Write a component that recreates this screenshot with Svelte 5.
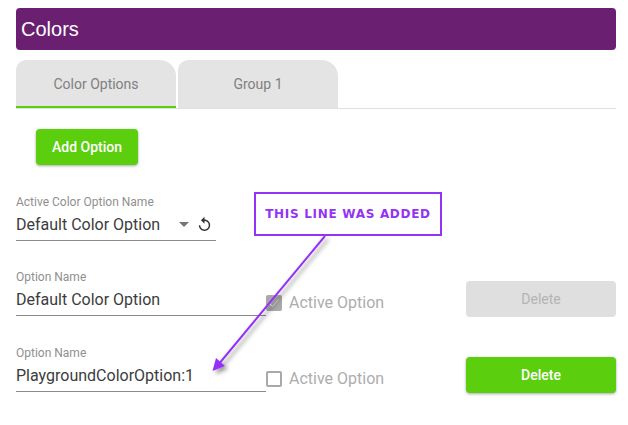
<script lang="ts">
  const options = [
    { name: "Default Color Option", active: true, disabled: true },
    { name: "PlaygroundColorOption:1", active: false, disabled: false },
  ];
</script>

<div class="page">
  <h1 class="title">Colors</h1>

  <div class="tabs">
    <button class="tab selected">Color Options</button>
    <button class="tab">Group 1</button>
  </div>

  <button class="btn add">Add Option</button>

  <div class="field select-field">
    <span class="label">Active Color Option Name</span>
    <div class="value">
      <span class="grow">Default Color Option</span>
      <span class="caret"></span>
      <svg class="reset" width="17" height="17" viewBox="0 0 24 24" fill="#333">
        <path d="M12 5V1L7 6l5 5V7c3.31 0 6 2.69 6 6s-2.69 6-6 6-6-2.69-6-6H4c0 4.42 3.58 8 8 8s8-3.58 8-8-3.58-8-8-8z" />
      </svg>
    </div>
  </div>

  {#each options as opt}
    <div class="row">
      <div class="field">
        <span class="label">Option Name</span>
        <div class="value">{opt.name}</div>
      </div>
      <div class="check-wrap">
        <span class="check" class:on={opt.active}>
          {#if opt.active}
            <svg width="16" height="16" viewBox="0 0 16 16" fill="none" stroke="#e8e8e8" stroke-width="1">
              <path d="M3.5 8.5 6.500 11.5 12.5 4.500" />
            </svg>
          {/if}
        </span>
        <span class="check-label">Active Option</span>
      </div>
      <button class="btn delete" disabled={opt.disabled}>Delete</button>
    </div>
  {/each}

  <div class="note">THIS LINE WAS ADDED</div>
  <svg class="arrow" width="628" height="425" viewBox="0 0 628 425">
    <defs>
      <filter id="shadow" x="-20%" y="-20%" width="140%" height="140%">
        <feDropShadow dx="3" dy="3" stdDeviation="2" flood-color="#000" flood-opacity="0.4" />
      </filter>
    </defs>
    <g filter="url(#shadow)">
      <line x1="325" y1="236" x2="218" y2="365" stroke="#9333f5" stroke-width="2" />
      <path d="M212.500 371 216 358 225 366Z" fill="#9333f5" />
    </g>
  </svg>
</div>

<style>
  :global(body) {
    margin: 0;
    background: #fff;
  }

  .page {
    position: relative;
    box-sizing: border-box;
    width: 628px;
    height: 425px;
    padding: 8px 12px 0 16px;
    overflow: hidden;
    font-family: Roboto, sans-serif;
  }

  .title {
    box-sizing: border-box;
    height: 42px;
    margin: 0 0 10px;
    padding-left: 5px;
    background: #6a1f70;
    border-radius: 4px;
    color: #fff;
    font: 400 20px/42px "Liberation Sans", sans-serif;
  }

  .tabs {
    display: flex;
    gap: 2px;
    height: 49px;
    border-bottom: 1px solid #e0e0e0;
    box-sizing: border-box;
  }

  .tab {
    box-sizing: border-box;
    width: 160px;
    height: 48px;
    padding: 0;
    border: none;
    border-radius: 10px 16px 0 0;
    background: #e4e4e4;
    color: #808080;
    font: 400 14px Roboto, sans-serif;
  }

  .tab.selected {
    padding-top: 2px;
    border-bottom: 2px solid #5bce0e;
  }

  .btn {
    display: block;
    border: none;
    border-radius: 4px;
    background: #5bce0e;
    color: #fff;
    font: 500 14px Roboto, sans-serif;
    box-shadow: 0 1px 3px rgba(0, 0, 0, 0.35);
  }

  .add {
    width: 102px;
    height: 36px;
    margin: 20px 0 0 20px;
  }

  .field {
    box-sizing: border-box;
    width: 250px;
    height: 46px;
    border-bottom: 1px solid #8a8a8a;
  }

  .select-field {
    width: 200px;
    margin-top: 30px;
    margin-bottom: 29px;
  }

  .label {
    display: block;
    height: 14px;
    color: #8f8f8f;
    font-size: 12px;
    line-height: 14px;
  }

  .value {
    display: flex;
    align-items: center;
    height: 30px;
    color: #3c3c3c;
    font-size: 16px;
  }

  .grow {
    flex: 1;
  }

  .caret {
    width: 0;
    height: 0;
    margin-right: 7px;
    border-left: 5px solid transparent;
    border-right: 5px solid transparent;
    border-top: 5px solid #757575;
  }

  .reset {
    margin-right: 3px;
  }

  .row {
    display: flex;
    align-items: flex-start;
    height: 76px;
  }

  .check-wrap {
    display: flex;
    align-items: center;
    gap: 7px;
    height: 46px;
    padding-top: 20px;
    box-sizing: border-box;
    width: 200px;
  }

  .check {
    box-sizing: border-box;
    width: 16px;
    height: 16px;
    border: 2px solid #a9a9a9;
    border-radius: 2px;
  }

  .check.on {
    background: #a9a9a9;
  }

  .check.on svg {
    display: block;
    margin: -2px;
  }

  .check-label {
    margin-bottom: 2px;
    color: #adadad;
    font-size: 16px;
  }

  .delete {
    width: 150px;
    height: 36px;
    margin-top: 11px;
  }

  .delete:disabled {
    background: #dfdfdf;
    color: #b4b4b4;
    font-weight: 400;
    box-shadow: none;
  }

  .note {
    position: absolute;
    left: 254px;
    top: 192px;
    box-sizing: border-box;
    width: 188px;
    height: 44px;
    border: 2px solid #9333f5;
    background: #fff;
    color: #9333f5;
    font: 700 12px/40px "DejaVu Sans", sans-serif;
    letter-spacing: 0.7px;
    text-align: center;
  }

  .arrow {
    position: absolute;
    left: 0;
    top: 0;
    pointer-events: none;
  }
</style>
